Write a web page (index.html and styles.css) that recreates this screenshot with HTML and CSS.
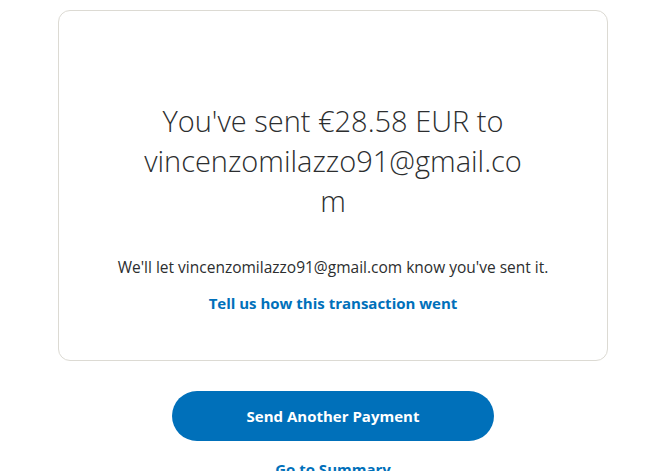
FILE: index.html
```html
<!DOCTYPE html>
<html lang="en">
<head>
<meta charset="utf-8">
<title>Payment sent</title>
<link rel="stylesheet" href="styles.css">
</head>
<body>
<main class="page">
  <section class="card">
    <h1 class="headline">You've sent €28.58 EUR to <span class="recipient">vincenzomilazzo91@gmail.com</span></h1>
    <p class="note">We'll let vincenzomilazzo91@gmail.com know you've sent it.</p>
    <a class="feedback" href="#">Tell us how this transaction went</a>
  </section>
  <div class="actions">
    <a class="primary-btn" href="#">Send Another Payment</a>
    <a class="secondary-link" href="#">Go to Summary</a>
  </div>
</main>
</body>
</html>
```

FILE: styles.css
```css
html, body {
  margin: 0;
  padding: 0;
  background: #ffffff;
}
body {
  padding-right: 2px;
  font-family: "Open Sans", "Liberation Sans", sans-serif;
  color: #2c2e2f;
}
.page {
  width: 550px;
  margin: 10px auto 0;
  display: flex;
  flex-direction: column;
  align-items: center;
}
.card {
  box-sizing: border-box;
  width: 100%;
  height: 351px;
  border: 1px solid #dcdad3;
  border-radius: 12px;
  display: flex;
  flex-direction: column;
  align-items: center;
  padding-top: 90px;
}
.headline {
  margin: 0;
  width: 390px;
  font-size: 29px;
  font-weight: 300;
  line-height: 40px;
  text-align: center;
  color: #2c2e2f;
}
.recipient {
  display: inline-block;
  width: 100%;
  word-break: break-all;
}
.note {
  margin: 36px 0 0;
  font-size: 15.5px;
  line-height: 20px;
  text-align: center;
}
.feedback {
  margin-top: 16px;
  font-size: 15px;
  line-height: 20px;
  font-weight: 700;
  color: #0070ba;
  text-decoration: none;
}
.actions {
  display: flex;
  flex-direction: column;
  align-items: center;
  margin-top: 30px;
}
.primary-btn {
  width: 322px;
  height: 50px;
  border-radius: 25px;
  background: #0070ba;
  color: #ffffff;
  font-size: 15px;
  font-weight: 700;
  display: flex;
  align-items: center;
  justify-content: center;
  text-decoration: none;
}
.secondary-link {
  margin-top: 18px;
  font-size: 15px;
  font-weight: 700;
  line-height: 20px;
  color: #0070ba;
  text-decoration: none;
}
```
